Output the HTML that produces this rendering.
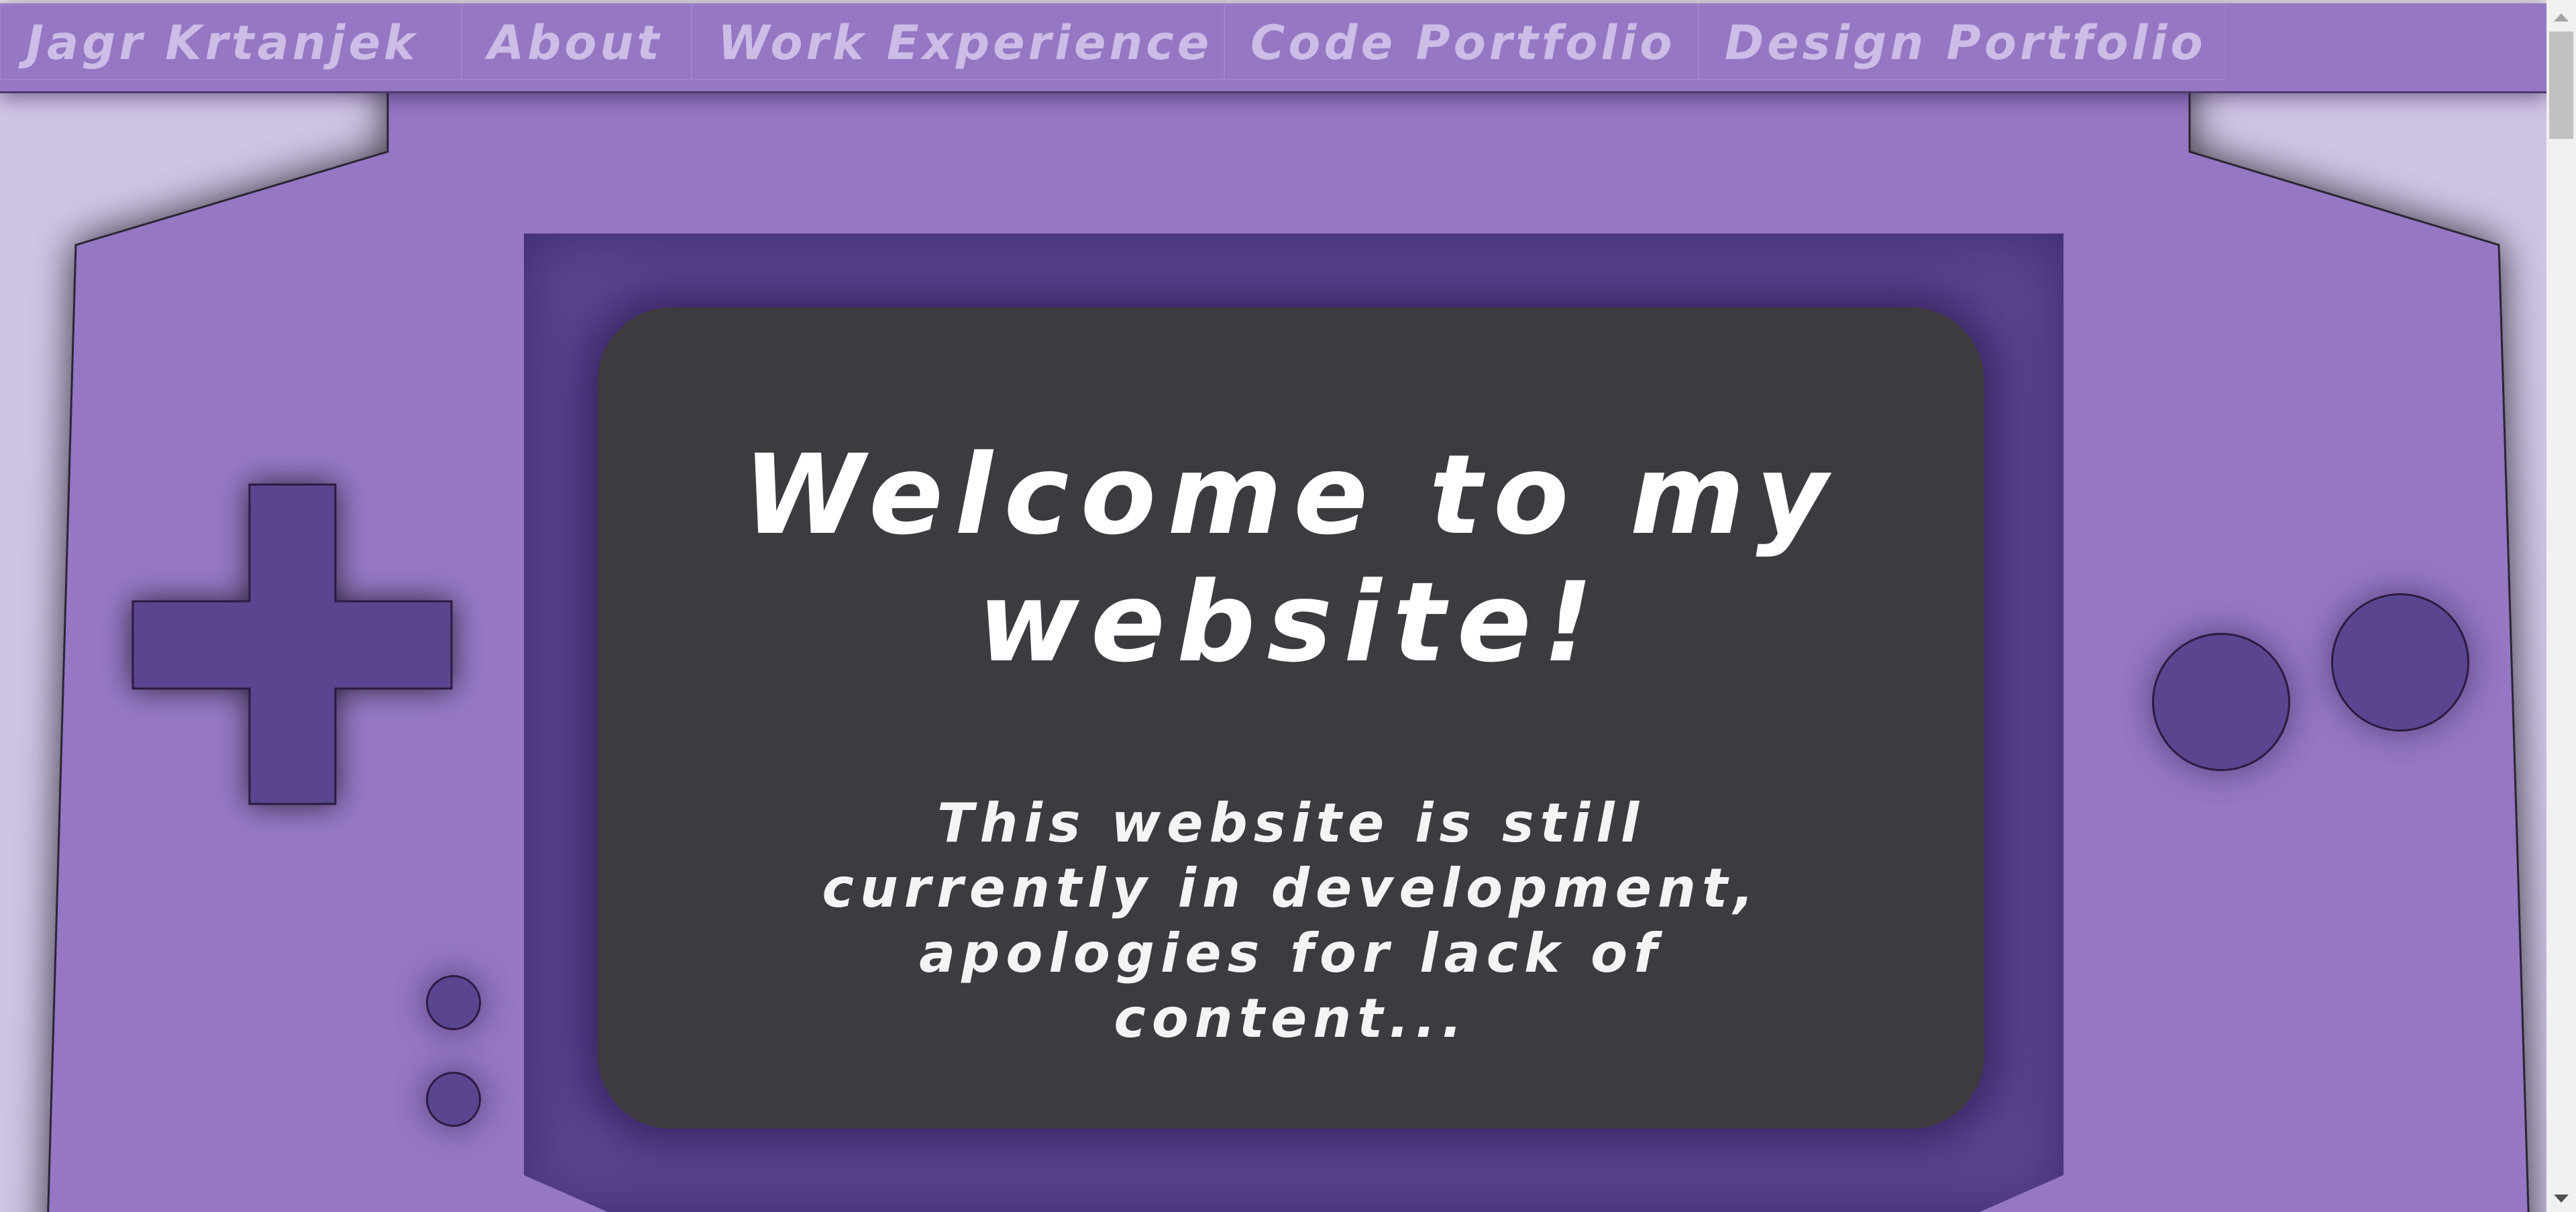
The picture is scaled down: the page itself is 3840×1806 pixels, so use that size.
<!DOCTYPE html>
<html><head><meta charset="utf-8"><style>
html,body{margin:0;padding:0;width:3840px;height:1806px;overflow:hidden;background:#d0c4e6;font-family:"DejaVu Sans","Liberation Sans",sans-serif;}
.abs{position:absolute;}
#top{left:0;top:0;width:3796px;height:5px;background:#e2e2e2;}
#nav{left:0;top:5px;width:3796px;height:131px;background:#9577c4;border-bottom:3px solid #4a3a6a;box-shadow:0 6px 28px rgba(40,20,70,0.55);z-index:5;}
.item{position:absolute;top:2px;height:112px;border:1px solid rgba(255,255,255,0.12);color:#cbbde6;font-weight:bold;font-style:italic;font-size:70px;line-height:112px;text-align:left;padding-left:38px;letter-spacing:5px;box-sizing:border-box;white-space:nowrap;overflow:hidden;}
#sb{left:3796px;top:0;width:44px;height:1806px;background:#f1f1f1;z-index:6;}
#thumb{left:3800px;top:47px;width:36px;height:160px;background:#c1c1c1;z-index:7;}
.arr{position:absolute;left:3807px;width:0;height:0;border-left:11px solid transparent;border-right:11px solid transparent;z-index:7;}
#screenbox{left:781px;top:348px;width:2295px;height:1458px;background:#5a4590;clip-path:polygon(0 0,100% 0,100% 1403px,2170px 100%,125px 100%,0 1403px);box-shadow:inset 0 0 90px #3e2b70;}
#screen{left:891px;top:458px;width:2067px;height:1224px;background:#3d3a40;border-radius:110px;box-shadow:0 0 60px 20px rgba(50,30,90,0.85);text-align:center;color:#fff;}
h1{margin:0;position:absolute;top:185px;left:0;width:100%;font-size:164px;line-height:190px;font-style:italic;font-weight:bold;letter-spacing:17px;}
p{margin:0;position:absolute;top:720px;left:0;width:100%;font-size:80px;line-height:97px;font-style:italic;font-weight:bold;letter-spacing:9px;color:#f4f4f4;}
.btn{background:#5a4590;border:3px solid #2a1c40;border-radius:50%;box-sizing:border-box;box-shadow:0 0 40px 10px rgba(60,40,90,0.45);}
</style></head><body>
<div id="top" class="abs"></div>
<svg class="abs" style="left:0;top:0" width="3796" height="1806">
<defs><filter id="sh" x="-10%" y="-10%" width="120%" height="120%"><feGaussianBlur in="SourceAlpha" stdDeviation="30"/><feComponentTransfer><feFuncA type="linear" slope="0.75"/></feComponentTransfer><feMerge><feMergeNode/><feMergeNode in="SourceGraphic"/></feMerge></filter>
<filter id="ds" x="-50%" y="-50%" width="200%" height="200%"><feGaussianBlur in="SourceAlpha" stdDeviation="22"/><feComponentTransfer><feFuncA type="linear" slope="0.7"/></feComponentTransfer><feMerge><feMergeNode/><feMergeNode in="SourceGraphic"/></feMerge></filter></defs>
<polygon points="578,100 3264,100 3264,226 3725,365 3772,1900 69,1900 113,365 578,226" fill="#9577c4" stroke="#2b2535" stroke-width="3" filter="url(#sh)"/>
<path d="M372,722 H500 V896 H673 V1026 H500 V1198 H372 V1026 H198 V896 H372 Z" fill="#5a4590" stroke="#2a1c40" stroke-width="3" filter="url(#ds)"/>
</svg>
<div id="nav" class="abs">
<div class="item" style="left:0;width:688px">Jagr Krtanjek</div>
<div class="item" style="left:688px;width:343px">About</div>
<div class="item" style="left:1031px;width:794px">Work Experience</div>
<div class="item" style="left:1825px;width:707px">Code Portfolio</div>
<div class="item" style="left:2532px;width:786px">Design Portfolio</div>
</div>
<div id="screenbox" class="abs"></div>
<div id="screen" class="abs">
<h1>Welcome to my<br>website!</h1>
<p>This website is still<br>currently in development,<br>apologies for lack of<br>content...</p>
</div>
<div class="abs btn" style="left:3208px;top:943px;width:206px;height:206px"></div>
<div class="abs btn" style="left:3475px;top:884px;width:206px;height:206px"></div>
<div class="abs btn" style="left:635px;top:1453px;width:82px;height:82px"></div>
<div class="abs btn" style="left:635px;top:1597px;width:82px;height:82px"></div>
<div id="sb" class="abs"></div>
<div id="thumb" class="abs"></div>
<div class="arr" style="top:20px;border-bottom:12px solid #a3a3a3"></div>
<div class="arr" style="top:1780px;border-top:12px solid #505050"></div>
</body></html>
